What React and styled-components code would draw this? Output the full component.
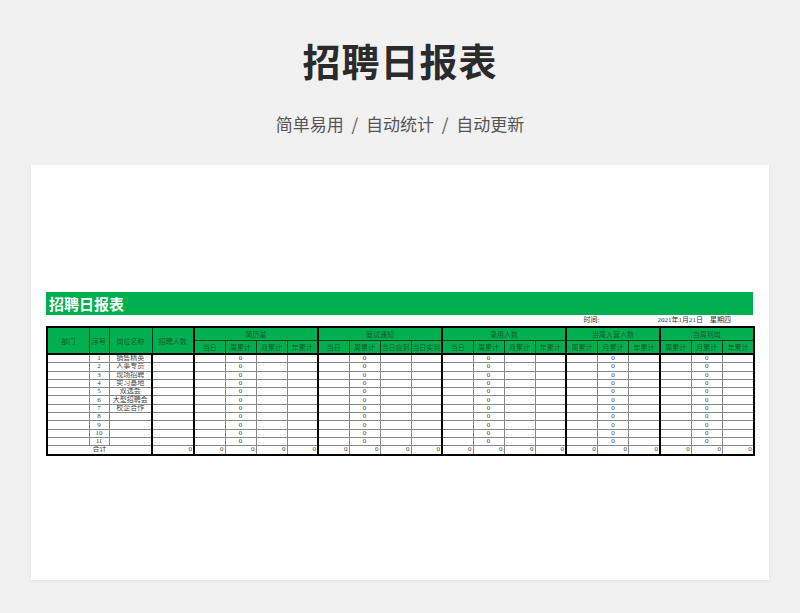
import React from "react";
import styled, { createGlobalStyle } from "styled-components";

const Global = createGlobalStyle`
  body { margin: 0; background: #f1f1f1; font-family: "Noto Sans CJK SC", sans-serif; }
`;
const Page = styled.div`
  width: 800px; height: 613px; display: flex; flex-direction: column; align-items: center;
`;
const Title = styled.h1`
  margin: 32px 0 0; height: 56px; font-size: 38px; font-weight: 700; color: #2b2b2b; letter-spacing: 1px; line-height: 56px;
`;
const Sub = styled.div`
  margin-top: 23px; font-size: 17px; color: #555; word-spacing: 4px; line-height: 26px;
`;
const Card = styled.div`
  margin-top: 28px; width: 738px; height: 415px; background: #fff; box-shadow: 0 1px 4px rgba(0,0,0,0.08);
  padding: 127px 15px 0; box-sizing: border-box;
`;
const Banner = styled.div`
  height: 23px; width: 707px; background: #00b050; color: #fff; font-size: 15px; font-weight: 700;
  line-height: 23px; padding-left: 3px; box-sizing: border-box;
`;
const TimeRow = styled.div`
  height: 11px; width: 707px; display: flex; justify-content: flex-end; gap: 40px; font-family: "Liberation Serif", "Noto Sans CJK SC", serif;
  font-size: 7px; color: #333; line-height: 11px; padding-right: 22px; box-sizing: border-box;
  span:first-child { margin-right: 18px; }
`;
const Table = styled.table`
  border-collapse: collapse; table-layout: fixed; width: 708px;
  font-family: "Liberation Serif", "Noto Sans CJK SC", serif; font-size: 7px; color: #444;
  border: 2px solid #000;
`;
const Th = styled.th`
  background: #00b050; color: #1d5a2c; font-weight: 400; height: ${p => p.$h || 12}px; padding: 0;
  border: 1px solid #1a3a20; ${p => p.$gl ? "border-left: 2px solid #000;" : ""}
  white-space: nowrap; overflow: hidden;
`;
const Td = styled.td`
  height: 7.3px; padding: 0 1px; line-height: 7px; border: 1px solid #888; text-align: ${p => p.$a || "center"};
  ${p => p.$gl ? "border-left: 2px solid #000;" : ""} ${p => p.$top ? "border-top: 2px solid #000;" : ""}
  white-space: nowrap; overflow: hidden;
`;

const widths = [42, 20, 43, 42, ...Array(12).fill(31), ...Array(6).fill(31.3)];
const groups = [
  ["简历量", ["当日", "周累计", "月累计", "年累计"]],
  ["面试通知", ["当日", "周累计", "当日应到", "当日实到"]],
  ["录用人数", ["当日", "周累计", "月累计", "年累计"]],
  ["当周入营人数", ["周累计", "月累计", "年累计"]],
  ["当周到岗", ["周累计", "月累计", "年累计"]],
];
const names = ["销售精英", "人事专员", "现场招聘", "实习基地", "双选会", "大型招聘会", "校企合作"];
const zeroCols = [1, 5, 9, 13, 16];

export default function App() {
  return (
    <Page>
      <Global />
      <Title>招聘日报表</Title>
      <Sub>简单易用 / 自动统计 / 自动更新</Sub>
      <Card>
        <Banner>招聘日报表</Banner>
        <TimeRow><span>时间:</span><span>2021年1月21日　星期四</span></TimeRow>
        <Table>
          <colgroup>{widths.map((w, i) => <col key={i} style={{ width: w }} />)}</colgroup>
          <thead>
            <tr>
              <Th rowSpan={2}>部门</Th><Th rowSpan={2}>序号</Th><Th rowSpan={2}>岗位名称</Th><Th rowSpan={2}>招聘人数</Th>
              {groups.map(([g, c]) => <Th key={g} colSpan={c.length} $gl>{g}</Th>)}
            </tr>
            <tr>
              {groups.flatMap(([g, c]) => c.map((s, i) => <Th key={g + i} $gl={i === 0}>{s}</Th>))}
            </tr>
          </thead>
          <tbody>
            {Array.from({ length: 11 }, (_, r) => (
              <tr key={r}>
                <Td $top={r === 0} />
                <Td $top={r === 0}>{r + 1}</Td>
                <Td $top={r === 0}>{names[r] || ""}</Td>
                <Td $top={r === 0} $gl />
                {Array.from({ length: 18 }, (_, c) => (
                  <Td key={c} $top={r === 0} $gl={[0, 4, 8, 12, 15].includes(c)}>{zeroCols.includes(c) ? "0" : ""}</Td>
                ))}
              </tr>
            ))}
            <tr>
              <Td colSpan={3}>合计</Td>
              <Td $gl $a="right">0</Td>
              {Array.from({ length: 18 }, (_, c) => (
                <Td key={c} $a="right" $gl={[0, 4, 8, 12, 15].includes(c)}>0</Td>
              ))}
            </tr>
          </tbody>
        </Table>
      </Card>
    </Page>
  );
}
